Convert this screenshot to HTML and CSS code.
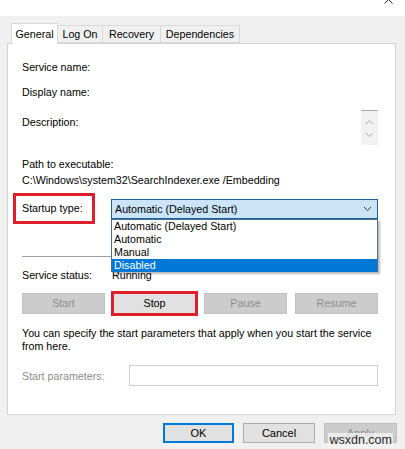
FILE: index.html
```html
<!DOCTYPE html>
<html>
<head>
<meta charset="utf-8">
<link rel="stylesheet" href="styles.css">
</head>
<body>
<div class="titlebar">
  <svg class="close-tail" width="9" height="5" viewBox="0 0 9 5"><path d="M0.5 4.5 L4.5 0.5 L8.5 4.5" fill="none" stroke="#222" stroke-width="1"/></svg>
</div>
<div class="dialog">
  <div class="tabs">
    <div class="tab tab-active">General</div>
    <div class="tab">Log On</div>
    <div class="tab">Recovery</div>
    <div class="tab">Dependencies</div>
  </div>
  <div class="panel">
    <div class="row r-service">Service name:</div>
    <div class="row r-display">Display name:</div>
    <div class="desc-row">
      <div class="desc-label">Description:</div>
      <div class="scrollbar">
        <svg width="9" height="6" viewBox="0 0 9 6"><path d="M1 5 L4.5 1.5 L8 5" fill="none" stroke="#c4c4c4" stroke-width="1.2"/></svg>
        <svg width="9" height="6" viewBox="0 0 9 6"><path d="M1 1 L4.5 4.5 L8 1" fill="none" stroke="#c4c4c4" stroke-width="1.2"/></svg>
      </div>
    </div>
    <div class="row r-path-label">Path to executable:</div>
    <div class="row r-path">C:\Windows\system32\SearchIndexer.exe /Embedding</div>
    <div class="startup-row">
      <div class="label-col"><div class="highlight">Startup type:</div></div>
      <div class="select">
        <span>Automatic (Delayed Start)</span>
        <svg width="9" height="6" viewBox="0 0 9 6"><path d="M1 1 L4.5 4.5 L8 1" fill="none" stroke="#333" stroke-width="1"/></svg>
      </div>
    </div>
    <div class="separator"></div>
    <div class="status-row">
      <div class="status-label">Service status:</div>
      <div>Running</div>
    </div>
    <div class="btn-row">
      <div class="btn btn-disabled">Start</div>
      <div class="btn btn-stop">Stop</div>
      <div class="btn btn-disabled">Pause</div>
      <div class="btn btn-disabled">Resume</div>
    </div>
    <div class="info">You can specify the start parameters that apply when you start the service from here.</div>
    <div class="params-row">
      <div class="params-label">Start parameters:</div>
      <div class="params-input"></div>
    </div>
    <div class="dropdown">
      <div class="opt">Automatic (Delayed Start)</div>
      <div class="opt">Automatic</div>
      <div class="opt">Manual</div>
      <div class="opt opt-selected">Disabled</div>
    </div>
  </div>
  <div class="footer">
    <div class="fbtn fbtn-ok">OK</div>
    <div class="fbtn">Cancel</div>
    <div class="fbtn fbtn-disabled">Apply</div>
  </div>
  <div class="watermark">wsxdn.com</div>
</div>
</body>
</html>
```
FILE: styles.css
```css
* { box-sizing: border-box; }
html, body { margin: 0; padding: 0; }
body {
  width: 405px;
  height: 449px;
  overflow: hidden;
  background: #f0f0f0;
  font-family: "Liberation Sans", Arial, sans-serif;
  font-size: 10.7px;
  color: #000;
}
.titlebar {
  height: 16px;
  background: #fff;
  display: flex;
  justify-content: flex-end;
  align-items: flex-start;
  padding-right: 12px;
}
.close-tail { display: block; margin-top: -1px; }
.dialog {
  position: relative;
  height: 433px;
  padding-top: 7px;
}
.tabs {
  display: flex;
  margin-left: 11px;
  height: 21px;
  align-items: flex-end;
  position: relative;
  z-index: 2;
}
.tab {
  height: 18px;
  line-height: 17px;
  border: 1px solid #d9d9d9;
  border-left: none;
  background: #f0f0f0;
  padding: 0;
  text-align: center;
  white-space: nowrap;
  margin-bottom: 1px;
}
.tab:nth-child(2) { width: 45px; }
.tab:nth-child(3) { width: 58px; }
.tab:nth-child(4) { width: 79px; }
.tab-active {
  width: 47px;
  height: 21px;
  line-height: 20px;
  background: #fff;
  border-left: 1px solid #d9d9d9;
  border-bottom: none;
  margin-bottom: 0;
}
.panel {
  position: relative;
  margin-left: 7px;
  width: 389px;
  margin-top: -1px;
  background: #fff;
  border: 1px solid #d4d4d4;
  padding: 0 17px 28px 14px;
}
.row { line-height: 14px; height: 14px; white-space: nowrap; }
.r-service { margin-top: 16px; }
.r-display { margin-top: 11px; }
.desc-row {
  margin-top: 11px;
  height: 35px;
  display: flex;
  justify-content: space-between;
}
.desc-label { margin-top: 5px; line-height: 14px; height: 14px; }
.scrollbar {
  width: 17px;
  height: 35px;
  background: #f2f2f2;
  border-top: 1px solid #a8a8a8;
  display: flex;
  flex-direction: column;
  align-items: center;
  justify-content: space-around;
  padding: 4px 0 4px;
}
.scrollbar svg { display: block; }
.r-path-label { margin-top: 12px; }
.r-path { margin-top: 2px; }
.startup-row {
  margin-top: 12px;
  display: flex;
  height: 20px;
}
.label-col { width: 89px; flex: none; }
.highlight {
  margin: -6px 0 0 -9px;
  width: 82px;
  height: 31px;
  border: 3px solid #de1f2b;
  padding-left: 6px;
  line-height: 25px;
}
.select {
  flex: 1;
  height: 20px;
  background: #cce4f7;
  border: 1px solid #1a5f9e;
  display: flex;
  align-items: center;
  justify-content: space-between;
  padding: 0 5px 0 3px;
}
.select svg { display: block; }
.separator {
  margin-top: 37px;
  height: 1px;
  background: #a0a0a0;
}
.status-row {
  margin-top: 11px;
  display: flex;
  line-height: 14px;
  height: 14px;
}
.status-label { width: 90px; flex: none; }
.btn-row {
  margin-top: 11px;
  display: grid;
  grid-template-columns: repeat(4, 1fr);
  column-gap: 8px;
  height: 21px;
}
.btn {
  border: 1px solid #adadad;
  background: #e1e1e1;
  text-align: center;
  line-height: 19px;
}
.btn-disabled {
  background: #cccccc;
  border-color: #c2c2c2;
  color: #8e8e8e;
}
.btn-stop {
  outline: 2px solid #de1f2b;
  outline-offset: 0;
  border-color: #de1f2b;
}
.info {
  margin-top: 13px;
  line-height: 13px;
  width: 355px;
}
.params-row {
  margin-top: 12px;
  display: flex;
  align-items: center;
  height: 21px;
}
.params-label { width: 107px; flex: none; color: #8d8d8d; }
.params-input {
  flex: 1;
  height: 21px;
  border: 1px solid #cccccc;
  background: #fff;
}
.dropdown {
  position: absolute;
  left: 103px;
  top: 175px;
  width: 267px;
  height: 53px;
  background: #fff;
  border: 1px solid #4f6f8f;
  box-shadow: 2px 2px 2px rgba(0,0,0,0.28);
  z-index: 3;
}
.opt {
  height: 13px;
  line-height: 13px;
  padding-left: 2px;
  white-space: nowrap;
}
.opt-selected { background: #0078d7; color: #fff; }
.footer {
  display: flex;
  justify-content: flex-end;
  column-gap: 9px;
  padding-right: 8px;
  margin-top: 8px;
}
.fbtn {
  width: 72px;
  height: 20px;
  line-height: 18px;
  text-align: center;
  background: #e1e1e1;
  border: 1px solid #adadad;
  font-size: 11px;
}
.fbtn-ok { width: 71px; border: 2px solid #0078d7; line-height: 16px; }
.fbtn-disabled { width: 73px; background: #cccccc; border-color: #bfbfbf; color: #8e8e8e; }
.watermark {
  position: absolute;
  right: 12px;
  bottom: 1px;
  font-size: 12.5px;
  color: #2a2a2a;
  background: rgba(245,245,245,0.75);
  padding: 0 1px;
  line-height: 15px;
}
```
